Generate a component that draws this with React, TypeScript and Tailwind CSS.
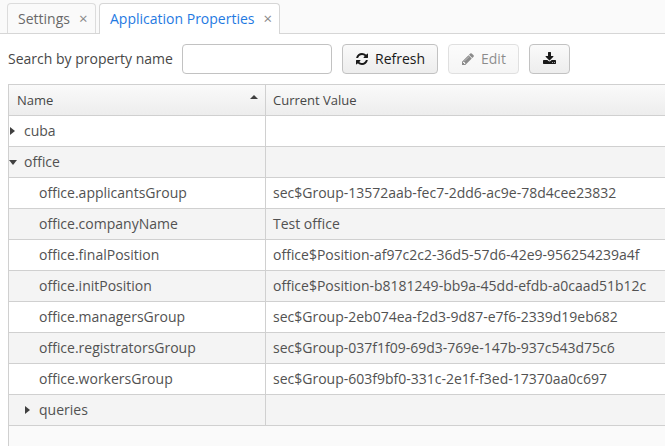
import React from 'react';

type Row = { name: string; value?: string; depth: 0 | 1; state?: 'open' | 'closed' };

const rows: Row[] = [
  { name: 'cuba', depth: 0, state: 'closed' },
  { name: 'office', depth: 0, state: 'open' },
  { name: 'office.applicantsGroup', value: 'sec$Group-13572aab-fec7-2dd6-ac9e-78d4cee23832', depth: 1 },
  { name: 'office.companyName', value: 'Test office', depth: 1 },
  { name: 'office.finalPosition', value: 'office$Position-af97c2c2-36d5-57d6-42e9-956254239a4f', depth: 1 },
  { name: 'office.initPosition', value: 'office$Position-b8181249-bb9a-45dd-efdb-a0caad51b12c', depth: 1 },
  { name: 'office.managersGroup', value: 'sec$Group-2eb074ea-f2d3-9d87-e7f6-2339d19eb682', depth: 1 },
  { name: 'office.registratorsGroup', value: 'sec$Group-037f1f09-69d3-769e-147b-937c543d75c6', depth: 1 },
  { name: 'office.workersGroup', value: 'sec$Group-603f9bf0-331c-2e1f-f3ed-17370aa0c697', depth: 1 },
  { name: 'queries', depth: 1, state: 'closed' },
];

function Icon({ d, width, className }: { d: string; width: number; className: string }) {
  return (
    <svg className={className} viewBox={`0 0 ${width} 1792`} fill="currentColor">
      <path d={d} />
    </svg>
  );
}

const REFRESH =
  'M1511 1056q0 5-1 7-64 268-268 434.5t-478 166.5q-146 0-282.5-55t-243.5-157l-129 129q-19 19-45 19t-45-19-19-45v-448q0-26 19-45t45-19h448q26 0 45 19t19 45-19 45l-137 137q71 66 161 102t187 36q134 0 250-65t186-179q11-17 53-117 8-23 30-23h192q13 0 22.5 9.5t9.5 22.5zm25-800v448q0 26-19 45t-45 19h-448q-26 0-45-19t-19-45 19-45l138-138q-148-137-349-137-134 0-250 65t-186 179q-11 17-53 117-8 23-30 23h-199q-13 0-22.5-9.5t-9.5-22.5v-7q65-268 270-434.5t480-166.5q146 0 284 55.5t245 156.5l130-129q19-19 45-19t45 19 19 45z';
const PENCIL =
  'M363 1536l91-91-235-235-91 91v107h128v128h107zm523-928q0-22-22-22-10 0-17 7l-542 542q-7 7-7 17 0 22 22 22 10 0 17-7l542-542q7-7 7-17zm-54-192l416 416-832 832h-416v-416zm683 96q0 53-37 90l-166 166-416-416 166-165q36-38 90-38 53 0 91 38l235 234q37 39 37 91z';
const DOWNLOAD =
  'M1280 1344q0-26-19-45t-45-19-45 19-19 45 19 45 45 19 45-19 19-45zm256 0q0-26-19-45t-45-19-45 19-19 45 19 45 45 19 45-19 19-45zm128-224v320q0 40-28 68t-68 28h-1472q-40 0-68-28t-28-68v-320q0-40 28-68t68-28h465l135 136q58 56 136 56t136-56l136-136h464q40 0 68 28t28 68zm-325-569q17 41-14 70l-448 448q-18 19-45 19t-45-19l-448-448q-31-29-14-70 17-39 59-39h256v-448q0-26 19-45t45-19h256q26 0 45 19t19 45v448h256q42 0 59 39z';

function Expander({ state }: { state: 'open' | 'closed' }) {
  return state === 'open' ? (
    <svg className="h-[5px] w-2" viewBox="0 0 8 5" fill="#404040"><path d="M0 0h8L4 5z" /></svg>
  ) : (
    <svg className="ml-px h-2 w-[5px]" viewBox="0 0 5 8" fill="#404040"><path d="M0 0v8l5-4z" /></svg>
  );
}

const button = 'flex h-[30px] items-center rounded border border-[#c2c2c2] bg-gradient-to-b from-[#fafafa] to-[#ededed] text-[#191919]';

export default function App() {
  return (
    <div className="flex h-[446px] w-[665px] flex-col overflow-hidden bg-white font-['Open_Sans',sans-serif] text-sm text-[#474747]">
      <div className="flex h-[34px] shrink-0 items-end border-b border-[#d6d6d6] bg-[#fafafa] pl-[7px]">
        <div className="flex h-[30px] w-[89px] items-center rounded-t border border-b-0 border-[#dcdcdc] bg-[#fafafa] pl-[10px] text-[#696969]">
          <span className="w-[53px] whitespace-nowrap">Settings</span>
          <span className="ml-2 text-[15px] text-[#888]">×</span>
        </div>
        <div className="-mb-px ml-[3px] flex h-[31px] w-[181px] items-center rounded-t border border-b-0 border-[#d6d6d6] bg-white pb-px pl-[10px] text-[#1f7ae2]">
          <span className="w-[145px] whitespace-nowrap">Application Properties</span>
          <span className="ml-[8.5px] text-[15px] text-[#888]">×</span>
        </div>
      </div>

      <div className="flex h-[50px] shrink-0 items-center pl-2">
        <label className="w-[174px] whitespace-nowrap" htmlFor="search">Search by property name</label>
        <input id="search" className="h-[30px] w-[150px] rounded border border-[#c2c2c2] bg-white" />
        <button className={`${button} ml-[10px] w-24 pl-[13px]`}>
          <Icon d={REFRESH} width={1536} className="h-[14px] w-3" />
          <span className="ml-[7px]">Refresh</span>
        </button>
        <button className={`${button} ml-[10px] w-[71px] pl-[13px] opacity-50`} disabled>
          <Icon d={PENCIL} width={1536} className="h-[14px] w-3" />
          <span className="ml-[7px]">Edit</span>
        </button>
        <button className={`${button} ml-[10px] w-[41px] justify-center`}>
          <Icon d={DOWNLOAD} width={1664} className="h-[14px] w-[13px]" />
        </button>
      </div>

      <div className="ml-2 flex flex-1 flex-col border-l border-t border-[#d0d0d0] bg-[#fafafa]">
        <div className="flex h-[31px] shrink-0 border-b border-[#d0d0d0] bg-gradient-to-b from-[#fafafa] to-[#ededed] text-[13px]">
          <div className="flex w-[257px] items-center justify-between border-r border-[#d0d0d0] pl-2 pr-[7px]">
            <span>Name</span>
            <svg className="mb-[7px] h-1 w-2" viewBox="0 0 8 4" fill="#404040"><path d="M0 4h8L4 0z" /></svg>
          </div>
          <div className="flex items-center pl-[7px]">Current Value</div>
        </div>
        {rows.map((row, i) => (
          <div key={row.name} className={`flex h-[31px] shrink-0 border-b border-[#d0d0d0] text-[#525252] ${i % 2 ? 'bg-[#f4f4f4]' : 'bg-white'}`}>
            <div className={`flex w-[257px] items-center border-r border-[#d0d0d0] ${row.depth ? 'pl-[15px]' : ''}`}>
              <span className="flex w-[15px] items-center">{row.state && <Expander state={row.state} />}</span>
              <span>{row.name}</span>
            </div>
            <div className="flex items-center whitespace-nowrap pl-[7px]">{row.value}</div>
          </div>
        ))}
      </div>
    </div>
  );
}
